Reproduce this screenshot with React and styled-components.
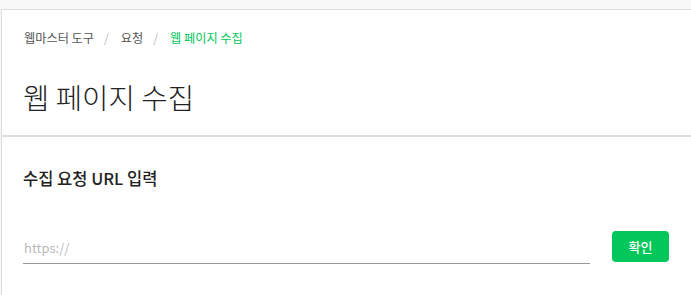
import styled, { createGlobalStyle } from "styled-components";

const GlobalStyle = createGlobalStyle`
  html, body {
    margin: 0;
    padding: 0;
    background: #f8f8f8;
    font-family: "Noto Sans CJK KR", "Noto Sans", sans-serif;
  }
`;

const Page = styled.div`
  padding: 9px 0 0 1px;
  min-height: 295px;
  box-sizing: border-box;
  display: flex;
  flex-direction: column;
`;

const Card = styled.div`
  flex: 1;
  background: #fff;
  border-top: 1px solid #ddd;
  border-left: 1px solid #ddd;
`;

const Header = styled.div`
  height: 127px;
  box-sizing: border-box;
  padding: 19px 22px 0 21px;
  border-bottom: 2px solid #ddd;
`;

const Crumbs = styled.nav`
  display: flex;
  align-items: center;
  gap: 10px;
  font-size: 12.2px;
  line-height: 18px;
  color: #555;
`;

const Crumb = styled.span`
  color: ${(p) => (p.$active ? "#03c75a" : "#555")};
  padding-left: ${(p) => (p.$first ? "1px" : "0")};
`;

const Slash = styled.span`
  color: #bbb;
  padding-right: 2px;
`;

const Title = styled.h1`
  margin: 32px 0 0;
  font-size: 28.7px;
  line-height: 36px;
  font-weight: 300;
  color: #222;
`;

const Body = styled.div`
  padding: 29px 22px 0 21px;
`;

const SectionTitle = styled.h2`
  margin: 0;
  font-size: 16.5px;
  line-height: 24px;
  font-weight: 500;
  color: #222;
`;

const Row = styled.div`
  display: flex;
  align-items: flex-start;
  gap: 22px;
  margin-top: 41px;
`;

const Input = styled.input`
  flex: 1;
  height: 33px;
  box-sizing: border-box;
  border: none;
  border-bottom: 1px solid #999;
  padding: 0 1px;
  font-family: inherit;
  font-size: 13px;
  color: #222;
  outline: none;
  background: transparent;
  &::placeholder {
    color: #bbb;
  }
`;

const Button = styled.button`
  width: 57px;
  height: 31px;
  border: none;
  border-radius: 4px;
  background: #03c75a;
  color: #fff;
  font-family: inherit;
  font-size: 13px;
  font-weight: 500;
  cursor: pointer;
`;

export default function App() {
  return (
    <>
      <GlobalStyle />
      <Page>
        <Card>
          <Header>
            <Crumbs>
              <Crumb $first>웹마스터 도구</Crumb>
              <Slash>/</Slash>
              <Crumb>요청</Crumb>
              <Slash>/</Slash>
              <Crumb $active>웹 페이지 수집</Crumb>
            </Crumbs>
            <Title>웹 페이지 수집</Title>
          </Header>
          <Body>
            <SectionTitle>수집 요청 URL 입력</SectionTitle>
            <Row>
              <Input placeholder="https://" />
              <Button>확인</Button>
            </Row>
          </Body>
        </Card>
      </Page>
    </>
  );
}
